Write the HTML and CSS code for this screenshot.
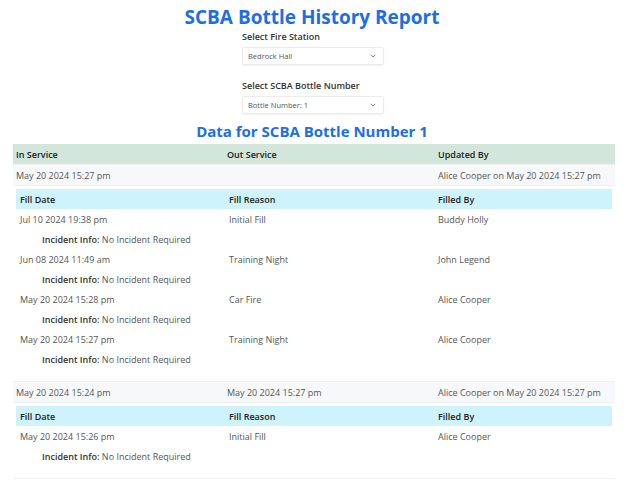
FILE: index.html
```html
<!DOCTYPE html>
<html lang="en">
  <head>
    <meta charset="UTF-8" />
    <meta name="viewport" content="width=device-width, initial-scale=1.0" />
    <title>SCBA Bottle History Report</title>
    <link rel="stylesheet" href="styles.css">
  </head>
  <body>
    <h1>SCBA Bottle History Report</h1>

    <div class="filters">
      <div class="form-group">
        <label>Select Fire Station</label>
        <div class="select-box">
          <span>Bedrock Hall</span>
          <svg width="6" height="4" viewBox="0 0 6 4"><path d="M0.8 0.8 L3 3 L5.2 0.8" fill="none" stroke="#777" stroke-width="0.9"/></svg>
        </div>
      </div>

      <div class="form-group">
        <label>Select SCBA Bottle Number</label>
        <div class="select-box">
          <span>Bottle Number: 1</span>
          <svg width="6" height="4" viewBox="0 0 6 4"><path d="M0.8 0.8 L3 3 L5.2 0.8" fill="none" stroke="#777" stroke-width="0.9"/></svg>
        </div>
      </div>
    </div>

    <h2>Data for SCBA Bottle Number 1</h2>

    <table class="history">
      <thead>
        <tr>
          <th class="col-a">In Service</th>
          <th class="col-b">Out Service</th>
          <th>Updated By</th>
        </tr>
      </thead>
      <tbody>
        <tr class="record">
          <td>May 20 2024 15:27 pm</td>
          <td></td>
          <td>Alice Cooper on May 20 2024 15:27 pm</td>
        </tr>
        <tr class="fills-row">
          <td colspan="3">
            <table class="fills">
              <thead>
                <tr>
                  <th class="col-a">Fill Date</th>
                  <th class="col-b">Fill Reason</th>
                  <th>Filled By</th>
                </tr>
              </thead>
              <tbody>
                <tr>
                  <td>Jul 10 2024 19:38 pm</td>
                  <td>Initial Fill</td>
                  <td>Buddy Holly</td>
                </tr>
                <tr class="incident">
                  <td colspan="3"><b>Incident Info:</b> No Incident Required</td>
                </tr>
                <tr>
                  <td>Jun 08 2024 11:49 am</td>
                  <td>Training Night</td>
                  <td>John Legend</td>
                </tr>
                <tr class="incident">
                  <td colspan="3"><b>Incident Info:</b> No Incident Required</td>
                </tr>
                <tr>
                  <td>May 20 2024 15:28 pm</td>
                  <td>Car Fire</td>
                  <td>Alice Cooper</td>
                </tr>
                <tr class="incident">
                  <td colspan="3"><b>Incident Info:</b> No Incident Required</td>
                </tr>
                <tr>
                  <td>May 20 2024 15:27 pm</td>
                  <td>Training Night</td>
                  <td>Alice Cooper</td>
                </tr>
                <tr class="incident">
                  <td colspan="3"><b>Incident Info:</b> No Incident Required</td>
                </tr>
              </tbody>
            </table>
          </td>
        </tr>

        <tr class="record">
          <td>May 20 2024 15:24 pm</td>
          <td>May 20 2024 15:27 pm</td>
          <td>Alice Cooper on May 20 2024 15:27 pm</td>
        </tr>
        <tr class="fills-row">
          <td colspan="3">
            <table class="fills">
              <thead>
                <tr>
                  <th class="col-a">Fill Date</th>
                  <th class="col-b">Fill Reason</th>
                  <th>Filled By</th>
                </tr>
              </thead>
              <tbody>
                <tr>
                  <td>May 20 2024 15:26 pm</td>
                  <td>Initial Fill</td>
                  <td>Alice Cooper</td>
                </tr>
                <tr class="incident">
                  <td colspan="3"><b>Incident Info:</b> No Incident Required</td>
                </tr>
              </tbody>
            </table>
          </td>
        </tr>
      </tbody>
    </table>
  </body>
</html>
```

FILE: styles.css
```css
body {
  margin: 0;
  font-family: "Open Sans", "DejaVu Sans", sans-serif;
  font-size: 9px;
  color: #555;
  background-color: white;
}

h1 {
  margin: 4px 0 0;
  text-align: center;
  font-size: 19px;
  font-weight: 700;
  line-height: 26px;
  color: #1d6ee6;
}

.filters {
  width: 142px;
  margin: 0 auto;
  padding-left: 2px;
}

.form-group {
  margin-bottom: 14px;
}

.form-group label {
  display: block;
  font-size: 9px;
  font-weight: 600;
  color: #333;
  line-height: 14px;
  margin-bottom: 3px;
}

.select-box {
  display: flex;
  align-items: center;
  justify-content: space-between;
  height: 18px;
  padding: 0 7px 0 5px;
  border: 1px solid #ececec;
  border-radius: 2px;
  box-shadow: 0 1px 2px rgba(0, 0, 0, 0.06);
  font-size: 7.5px;
  color: #555;
  box-sizing: border-box;
}

h2 {
  margin: -8px 0 0;
  text-align: center;
  font-size: 15px;
  font-weight: 700;
  line-height: 22px;
  color: #1d6ee6;
}

table {
  border-collapse: collapse;
}

.history {
  width: 602px;
  margin: 2px 13px 0;
}

.history > thead th {
  background-color: #d2e6dc;
  text-align: left;
  font-weight: 600;
  color: #222;
  height: 20px;
  padding: 0 3px;
}

.col-a,
.col-b {
  width: 205px;
}

.record td {
  background-color: #f7f8fa;
  height: 20px;
  padding: 0 3px;
  border-top: 1px solid #eef0f2;
  border-bottom: 1px solid #eef0f2;
}

.fills-row > td {
  padding: 3px 3px 12px;
  border-bottom: 1px solid #eef0f2;
}

.fills {
  width: 100%;
}

.fills th {
  background-color: #cff3fc;
  text-align: left;
  font-weight: 600;
  color: #222;
  height: 20px;
  padding: 0 4px;
}

.fills .col-a,
.fills .col-b {
  width: 201px;
}

.fills td {
  height: 20px;
  padding: 0 4px;
}

.incident td {
  padding-left: 26px;
}

.incident b {
  font-weight: 600;
  color: #333;
}
```
